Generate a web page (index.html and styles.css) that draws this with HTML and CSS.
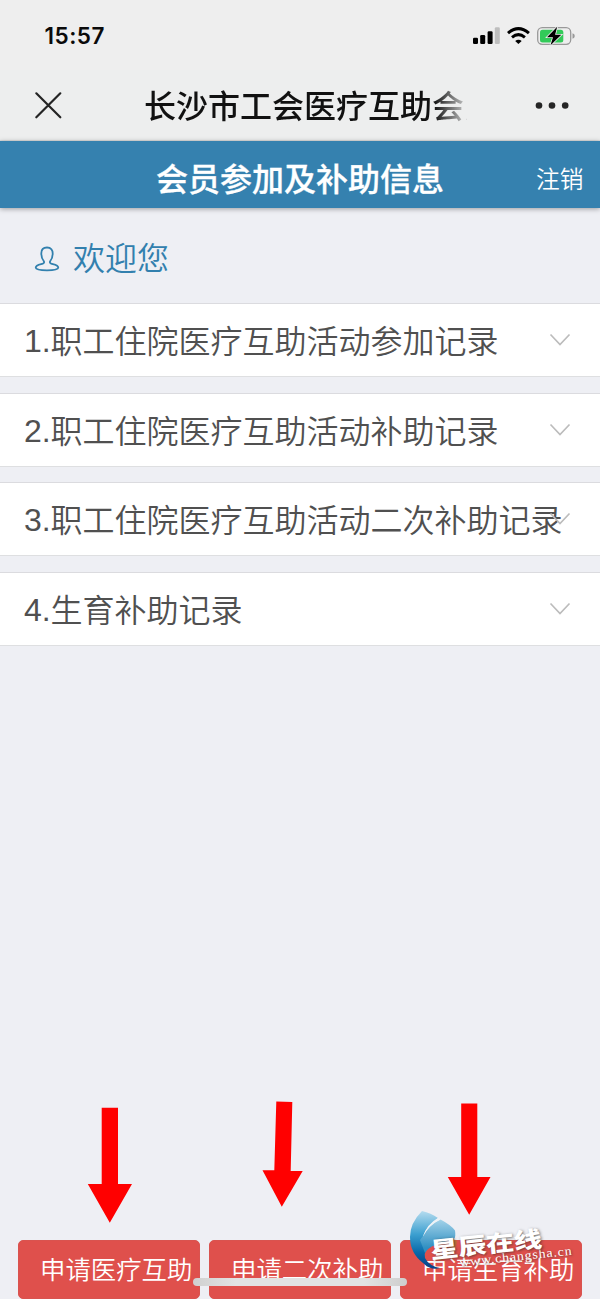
FILE: index.html
```
<!DOCTYPE html>
<html lang="zh-CN">
<head>
<meta charset="utf-8">
<title>会员参加及补助信息</title>
<link rel="stylesheet" href="styles.css">
</head>
<body>
<div class="screen">
  <div class="status">
    <span class="time">15:57</span>
    <svg class="status-icons" width="104" height="22" viewBox="0 0 104 22">
      <rect x="1" y="12.7" width="5" height="6.3" rx="1.3"/>
      <rect x="8.2" y="10" width="5" height="9" rx="1.3"/>
      <rect x="15.6" y="6.3" width="5" height="12.7" rx="1.3"/>
      <rect x="22.8" y="2.3" width="5" height="16.7" rx="1.3" fill="#bebebe"/>
      <g fill="none" stroke="#000" stroke-width="3">
        <path d="M36 8.2Q46.400 -0.900 56.900 8.200"/>
        <path d="M40 12.300Q46.400 7 52.900 12.300"/>
      </g>
      <path d="M43.200 15.900Q46.400 13.400 49.700 15.900L46.400 19Z"/>
      <rect x="65.700" y="2.700" width="33" height="16.600" rx="4.500" fill="none" stroke="#999" stroke-width="1.300"/>
      <rect x="68" y="4.800" width="23.300" height="12.600" rx="2.500" fill="#32ca59"/>
      <path d="M100.500 8.300Q102.800 9 102.800 11Q102.800 13 100.500 13.700Z" fill="#999"/>
      <path d="M85.200 1.800L75 12.300H81L78.500 20.200L89.300 9.700H83.100Z" stroke="#eee" stroke-width="1.600" paint-order="stroke"/>
    </svg>
  </div>
  <div class="nav">
    <svg width="28" height="28" viewBox="0 0 28 28"><path d="M2.300 2.300L26.300 26.300M26.300 2.300L2.300 26.300" fill="none" stroke="#242424" stroke-width="2.200" stroke-linecap="round"/></svg>
    <div class="nav-title">长沙市工会医疗互助会员</div>
    <svg class="more" width="34" height="8" viewBox="0 0 34 8" fill="#252525"><circle cx="4" cy="4.500" r="3.300"/><circle cx="17" cy="4.500" r="3.300"/><circle cx="30.200" cy="4.500" r="3.300"/></svg>
  </div>
  <header class="header">
    <h1>会员参加及补助信息</h1>
    <span class="logout">注销</span>
  </header>
  <div class="welcome">
    <svg class="user" width="26" height="28" viewBox="0 0 26 28"><path d="M13 2.500C8.800 2.500 7.300 5.200 7.300 8.300C7.300 11 7.500 13.500 9.700 16C10.500 17.200 10.200 18 8.800 18.600C5.500 19.500 1.800 19.800 1.700 22.700C2 25 6.500 25.400 13 25.400S24 25 24.300 22.700C24.200 19.800 20.500 19.500 17.200 18.600C15.800 18 15.500 17.200 16.300 16C18.500 13.500 18.700 11 18.700 8.300C18.700 5.200 17.200 2.500 13 2.500Z" fill="none" stroke="#3280ae" stroke-width="1.800"/></svg>
    <span>欢迎您</span>
  </div>
  <main class="list">
    <div class="row"><span>1.<b>职工住院医疗互助活动参加记录</b></span><svg class="chev" viewBox="0 0 22 14"><path d="M1.500 1.500L11 11.500L20.500 1.500"/></svg></div>
    <div class="row"><span>2.<b>职工住院医疗互助活动补助记录</b></span><svg class="chev" viewBox="0 0 22 14"><path d="M1.500 1.500L11 11.500L20.500 1.500"/></svg></div>
    <div class="row"><span>3.<b>职工住院医疗互助活动二次补助记录</b></span><svg class="chev" viewBox="0 0 22 14"><path d="M1.500 1.500L11 11.500L20.500 1.500"/></svg></div>
    <div class="row"><span>4.<b>生育补助记录</b></span><svg class="chev" viewBox="0 0 22 14"><path d="M1.500 1.500L11 11.500L20.500 1.500"/></svg></div>
  </main>
  <footer class="actions">
    <div class="btn">申请医疗互助</div>
    <div class="btn">申请二次补助</div>
    <div class="btn">申请生育补助</div>
  </footer>
  <div class="home-bar"></div>
  <svg class="arrows" width="600" height="130" viewBox="0 1095 600 130" fill="#f00">
    <path d="M101.700 1107.700H118V1184H132L109.800 1222.700L87.800 1184H101.700Z"/>
    <path d="M276.300 1101.500L292.300 1102L290.700 1171H302.700L281.800 1206.700L262.500 1170.300H274.300Z"/>
    <path d="M461.200 1103.600H477.300V1177H490.500L469.200 1214.700L447.800 1177H461.200Z"/>
  </svg>
  <div class="watermark">
    <svg width="50" height="62" viewBox="0 0 50 62">
      <defs>
        <linearGradient id="leaf" x1="0" y1="0" x2="0" y2="1"><stop offset="0" stop-color="#b5dcef"/><stop offset=".4" stop-color="#3da0d0"/><stop offset=".72" stop-color="#0869a9"/><stop offset="1" stop-color="#073d86"/></linearGradient>
        <linearGradient id="wing" gradientUnits="userSpaceOnUse" x1="0" y1="8" x2="0" y2="38"><stop offset="0" stop-color="#a9d6eb"/><stop offset="1" stop-color="#2f8fc2"/></linearGradient>
      </defs>
      <path d="M30 51Q46 46 48 31L44 29Q41 41 30 47Z" fill="#c77336"/>
      <path d="M13 1Q22 3 29 8Q18 16 14 26L22 37Q14 40 16 48Q20 56 31 58Q22 61 14 53Q1 43 1 27Q1 13 13 1Z" fill="url(#leaf)"/>
      <path d="M31.500 9.500Q42 15 46 20.500Q47 27 45 29L27 35Q19 37 16 43L11 30L14 26Q20 14 31.500 9.500Z" fill="url(#wing)"/>
      <path d="M29 8L31.500 9.500Q20 15 14 26.500Q18 14 29 8Z" fill="#eef3f7"/>
    </svg>
    <div class="wm-url">www.changsha.cn</div>
    <div class="wm-name">星辰在线</div>
  </div>
</div>
</body>
</html>
```
FILE: styles.css
```
* { box-sizing: border-box; }
body { margin: 0; }
.screen {
  position: relative;
  display: flex;
  flex-direction: column;
  width: 600px;
  height: 1299px;
  overflow: hidden;
  background: #eeeff4;
  color: #505050;
  font-family: "Liberation Sans", "Noto Sans CJK SC", sans-serif;
  font-weight: 400;
  white-space: nowrap;
}
.status {
  flex: none;
  display: flex;
  justify-content: space-between;
  align-items: center;
  height: 70px;
  padding: 2px 24px 0 44.5px;
  background: #eee;
}
.time { font: 600 22.5px/28px Inter, sans-serif; color: #0a0a0a; letter-spacing: .5px; }
.nav {
  flex: none;
  display: flex;
  align-items: center;
  height: 71px;
  padding: 0 31px 0 34px;
  background: #edeeee;
  border-bottom: 1px solid #dedede;
}
.nav-title {
  width: 323px;
  margin: -2px 0 0 82px;
  overflow: hidden;
  font-family: "Noto Sans CJK SC", sans-serif;
  font-size: 32px;
  font-weight: 500;
  line-height: 48px;
  color: #111;
  -webkit-mask-image: linear-gradient(90deg, #000 290px, rgba(0,0,0,.15) 323px);
  mask-image: linear-gradient(90deg, #000 290px, rgba(0,0,0,.15) 323px);
}
.more { margin-left: auto; }
.header {
  flex: none;
  display: grid;
  grid-template-columns: 1fr auto 1fr;
  align-items: center;
  height: 67px;
  padding: 0 16.5px;
  background: #3581af;
  color: #fff;
  font-family: "Noto Sans CJK SC", sans-serif;
  box-shadow: 0 1px 5px rgba(0,0,0,.35);
}
.header h1 { grid-column: 2; margin: 4px 0 0; font-size: 32px; font-weight: 500; line-height: 46px; -webkit-text-stroke: .3px #fff; }
.logout { justify-self: end; margin-top: 7px; font-size: 23.7px; line-height: 36px; font-weight: 350; }
.welcome {
  flex: none;
  display: flex;
  align-items: center;
  gap: 13px;
  height: 95px;
  padding: 1px 34px 0;
  color: #3280ae;
  font: 350 32px/48px "Noto Sans CJK SC", sans-serif;
}
.user { margin-top: 5px; }
.list { display: grid; gap: 15.5px; }
.row {
  display: flex;
  align-items: center;
  height: 74px;
  padding: 2px 29px 0 24px;
  background: #fff;
  border-top: 1.5px solid #dbdbdf;
  border-bottom: 1.5px solid #dedfe1;
  font-size: 32px;
  line-height: 48px;
}
.row span { flex: none; }
.row b { display: inline-block; margin-left: -.3px; transform: translateY(1px); font-weight: 350; }
.chev { flex: none; width: 22px; height: 14px; margin-left: auto; margin-bottom: 2px; fill: none; stroke: #bcbcbc; stroke-width: 1.7; }
.row:nth-child(3) .chev { position: relative; margin-left: -13px; }
.actions {
  display: grid;
  grid-template-columns: repeat(3, 1fr);
  gap: 9px;
  margin-top: auto;
  padding: 0 18px;
}
.btn {
  height: 59px;
  padding-left: 21px;
  border: 1px solid #d9534f;
  border-radius: 5px;
  background: #df504c;
  color: #fff;
  font: 350 25.4px/54px "Noto Sans CJK SC", sans-serif;
}
.home-bar {
  position: absolute;
  left: 193px;
  bottom: 13px;
  width: 214px;
  height: 8px;
  border-radius: 4px;
  background: linear-gradient(90deg, #d0d0d0, #e2e2e2 20%, #e2e2e2 80%, #cecece);
}
.arrows { position: absolute; left: 0; top: 1095px; }
.watermark { position: absolute; left: 409px; top: 1210px; width: 165px; height: 65px; }
.wm-name {
  position: absolute;
  left: 21px;
  top: 15px;
  color: #fff;
  font: 900 28px/36px "Noto Sans CJK SC", sans-serif;
  text-shadow: 1px 1px 3px rgba(40,40,40,.65);
  transform: rotate(-6deg) scaleY(.8);
}
.wm-url {
  position: absolute;
  left: 50px;
  top: 39px;
  color: #fff;
  font: 400 14px/16px "Liberation Serif", serif;
  letter-spacing: .8px;
  text-shadow: 1px 1px 2px rgba(60,40,40,.6);
  transform: rotate(-6deg) scaleY(.9);
}
```
